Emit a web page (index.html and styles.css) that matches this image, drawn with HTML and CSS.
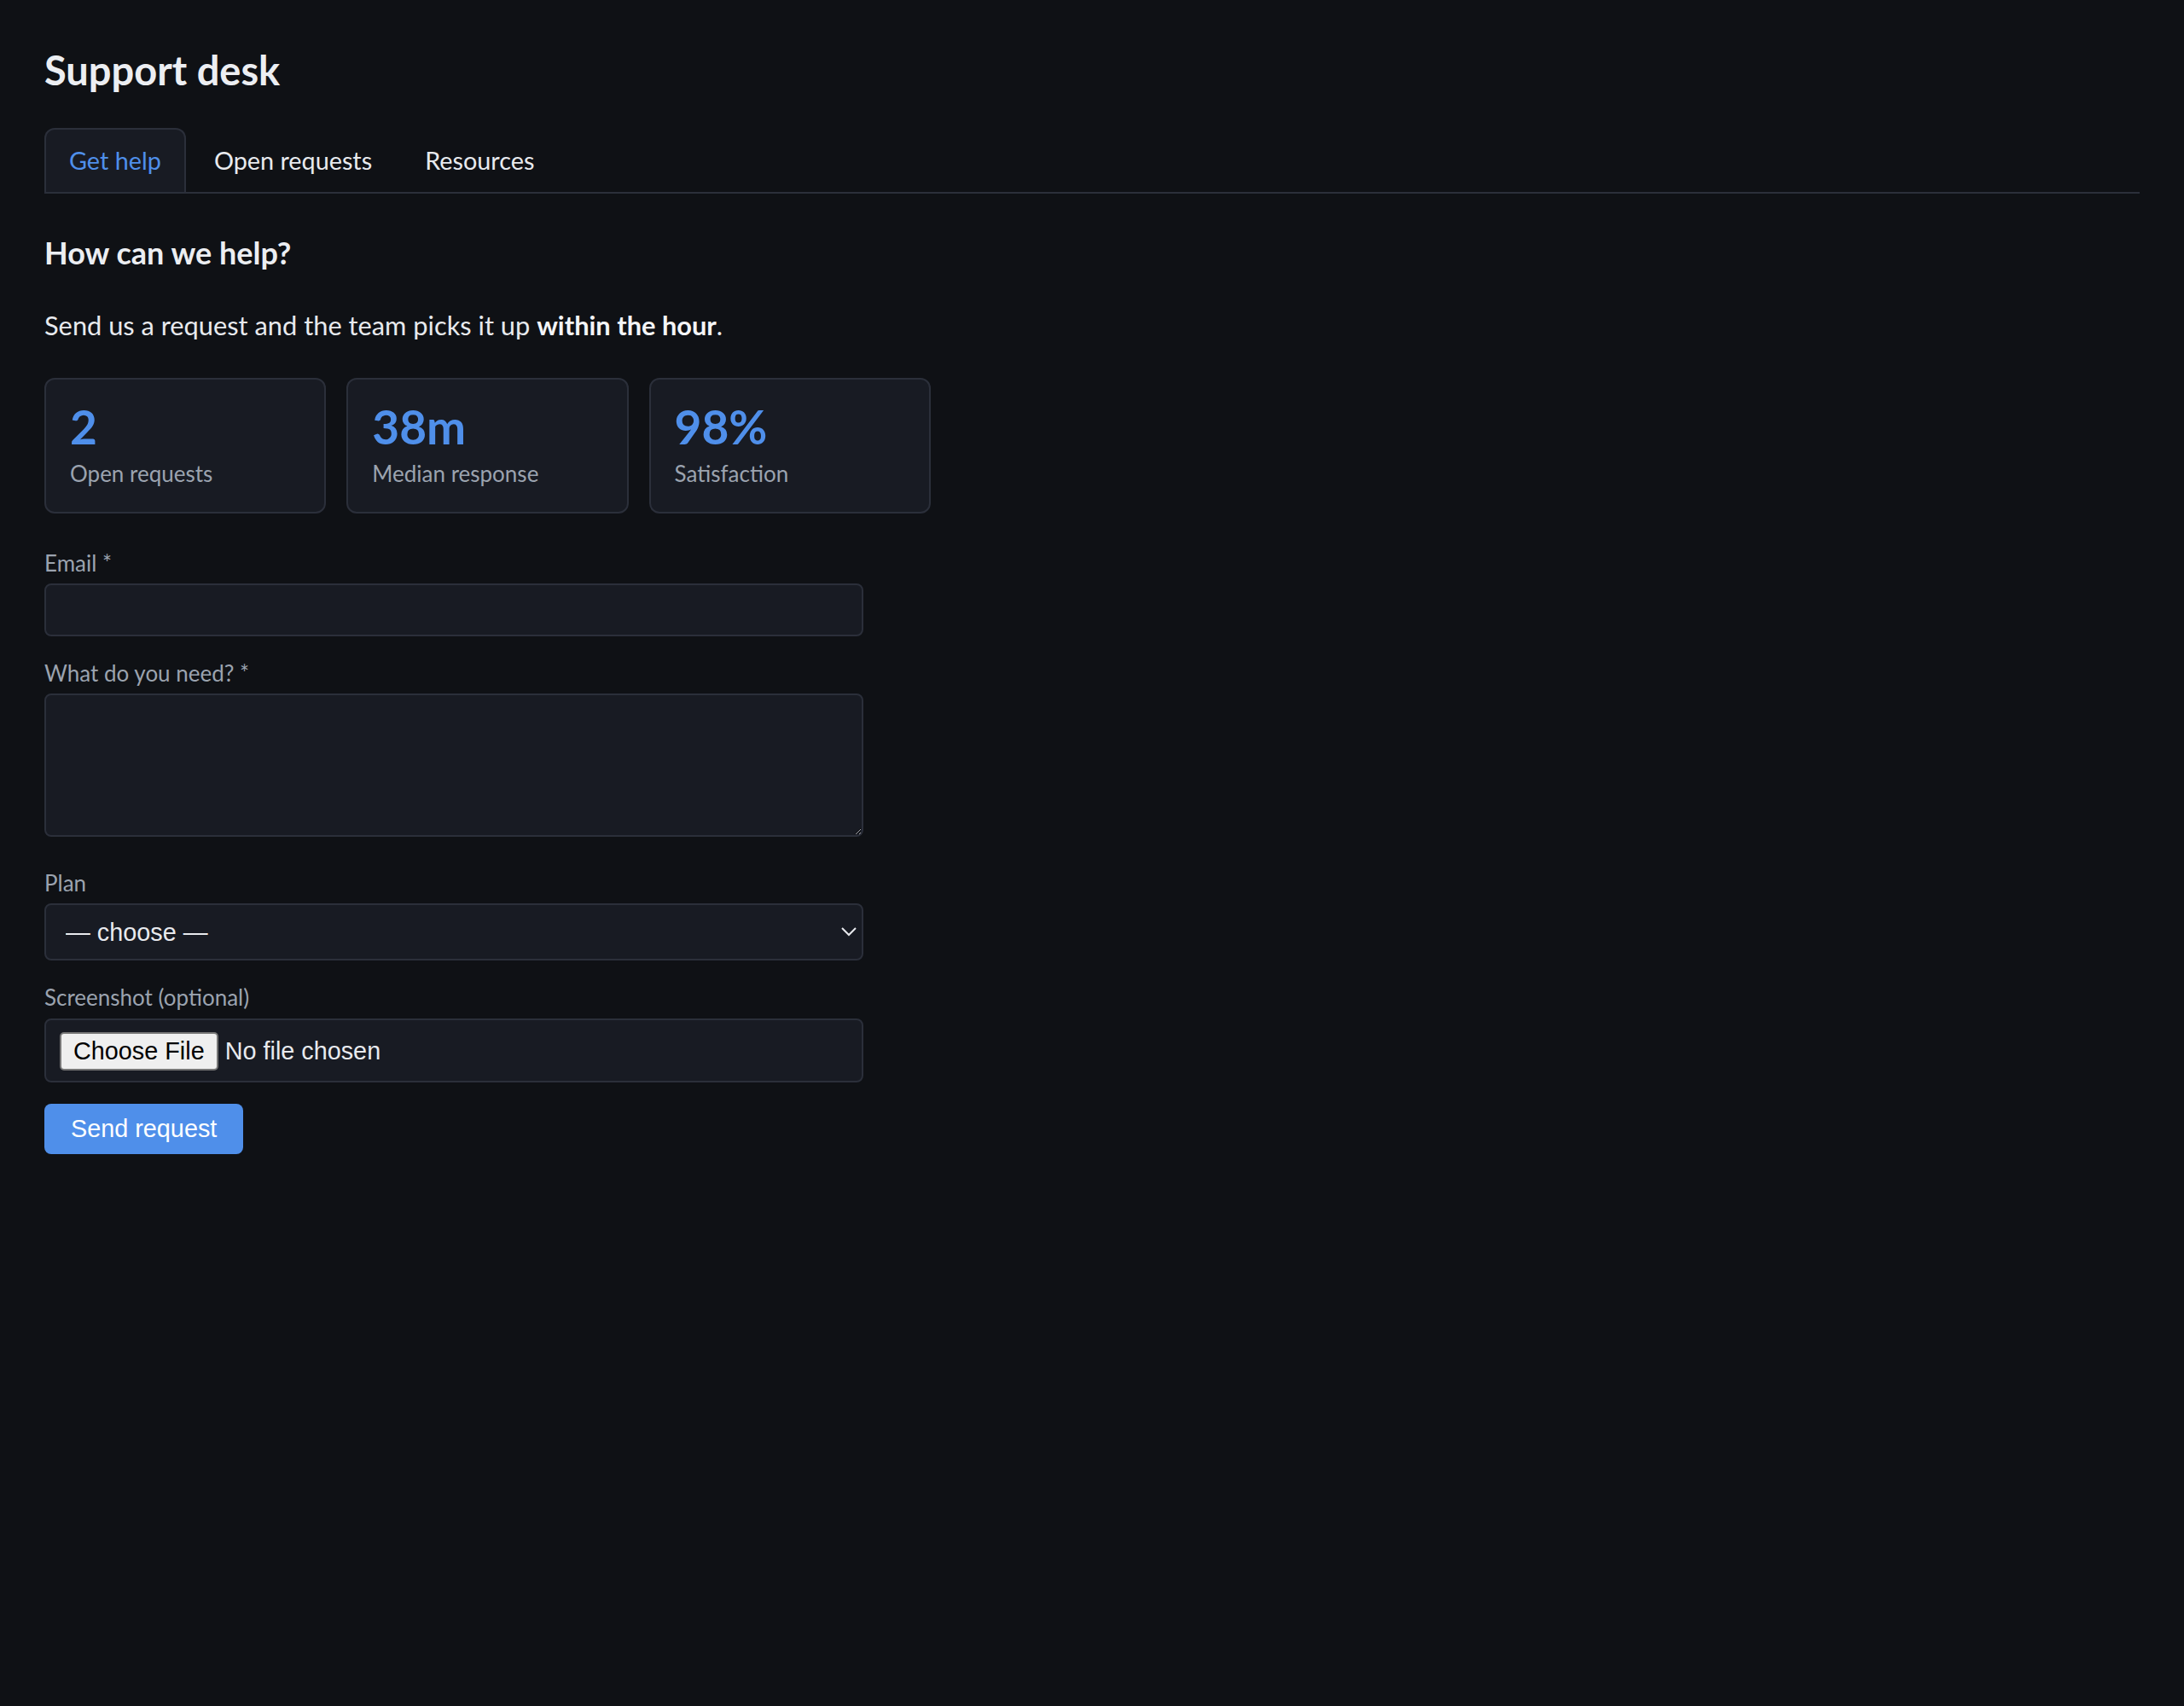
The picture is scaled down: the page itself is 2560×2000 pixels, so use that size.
FILE: index.html
```html
<!DOCTYPE html>
<html lang="en">
<head>
<meta charset="utf-8">
<title>Support desk</title>
<link rel="stylesheet" href="styles.css">
</head>
<body>
<main class="page">
  <h1 class="title">Support desk</h1>
  <nav class="tabs">
    <a class="tab tab-active" href="#">Get help</a>
    <a class="tab" href="#">Open requests</a>
    <a class="tab" href="#">Resources</a>
  </nav>
  <h2 class="heading">How can we help?</h2>
  <p class="lead">Send us a request and the team picks it up <strong>within the hour</strong>.</p>
  <section class="stats">
    <div class="stat"><div class="stat-value">2</div><div class="stat-label">Open requests</div></div>
    <div class="stat"><div class="stat-value">38m</div><div class="stat-label">Median response</div></div>
    <div class="stat"><div class="stat-value">98%</div><div class="stat-label">Satisfaction</div></div>
  </section>
  <form class="form">
    <div class="field">
      <label class="label" for="email">Email *</label>
      <input class="control control-input" id="email" type="email">
    </div>
    <div class="field field-textarea">
      <label class="label" for="need">What do you need? *</label>
      <textarea class="control control-textarea" id="need"></textarea>
    </div>
    <div class="field">
      <label class="label" for="plan">Plan</label>
      <select class="control control-select" id="plan">
        <option>— choose —</option>
        <option>Free</option>
        <option>Pro</option>
        <option>Enterprise</option>
      </select>
    </div>
    <div class="field field-file">
      <label class="label" for="shot">Screenshot (optional)</label>
      <input class="control control-file" id="shot" type="file">
    </div>
    <div class="actions">
      <button class="submit" type="button">Send request</button>
    </div>
  </form>
</main>
</body>
</html>
```

FILE: styles.css
```css
html {
  zoom: 2;
  background: #0f1115;
}

body {
  margin: 0;
  background: #0f1115;
  color: #e8eaee;
  font-family: "Lato", "Open Sans", sans-serif;
}

.page {
  padding: 27px 26px 26px;
}

.title {
  margin: 0 0 20px;
  font-size: 23.5px;
  line-height: 1.2;
  font-weight: 700;
  color: #eceef2;
}

.tabs {
  display: flex;
  gap: 2px;
  border-bottom: 1px solid #2b2f3a;
}

.tab {
  display: block;
  padding: 9.5px 13.5px 9.7px;
  font-size: 14.4px;
  line-height: 1.2;
  color: #e8eaee;
  text-decoration: none;
  border: 1px solid transparent;
  border-bottom: none;
  border-radius: 6px 6px 0 0;
}

.tab-active {
  color: #4f8fea;
  background: #181b23;
  border-color: #2b2f3a;
}

.heading {
  margin: 24px 0 0;
  font-size: 18px;
  line-height: 1.2;
  font-weight: 700;
  color: #eceef2;
}

.lead {
  margin: 22.5px 0 0;
  font-size: 15.4px;
  line-height: 1.2;
  color: #e8eaee;
}

.lead strong {
  font-weight: 700;
  color: #f4f5f7;
}

.stats {
  margin-top: 21.5px;
  display: grid;
  grid-template-columns: repeat(auto-fill, minmax(160px, 1fr));
  gap: 12px;
}

.stat {
  background: #181b23;
  border: 1px solid #2b2f3a;
  border-radius: 6px;
  padding: 14px 14px 12.5px;
}

.stat-value {
  font-size: 27.5px;
  line-height: 1;
  font-weight: 700;
  color: #4f8fea;
}

.stat-label {
  margin-top: 4.5px;
  font-size: 13px;
  line-height: 1.45;
  color: #9ba3af;
}

.form {
  margin-top: 21px;
  display: flex;
  flex-direction: column;
  max-width: 480px;
}

.field {
  display: flex;
  flex-direction: column;
  margin-bottom: 13.5px;
}

.field-textarea {
  margin-bottom: 19px;
}

.field-file {
  margin-bottom: 14.5px;
}

.label {
  font-size: 13px;
  line-height: 1.25;
  color: #9ba3af;
  margin-bottom: 3.8px;
}

.control {
  box-sizing: border-box;
  width: 100%;
  background: #181b23;
  border: 1px solid #2b2f3a;
  border-radius: 4px;
  color: #e8eaee;
  margin: 0;
}

.control-input {
  height: 31px;
  padding: 6px 8px;
}

.control-textarea {
  height: 84px;
  padding: 6px 8px;
  resize: vertical;
}

.control-select {
  height: 33.5px;
  padding: 0 5px 0 7.5px;
  font-family: "Liberation Sans", Arial, sans-serif;
  font-size: 14.4px;
}

.control-file {
  height: 37.5px;
  padding: 7px 8px;
  font-family: "Liberation Sans", Arial, sans-serif;
  font-size: 14.4px;
}

.actions {
  margin-top: -2px;
}

.submit {
  background: #4f8fea;
  color: #ffffff;
  border: none;
  border-radius: 4px;
  padding: 6.5px 15.5px;
  font-family: "Liberation Sans", Arial, sans-serif;
  font-size: 14.4px;
  cursor: pointer;
}
```
